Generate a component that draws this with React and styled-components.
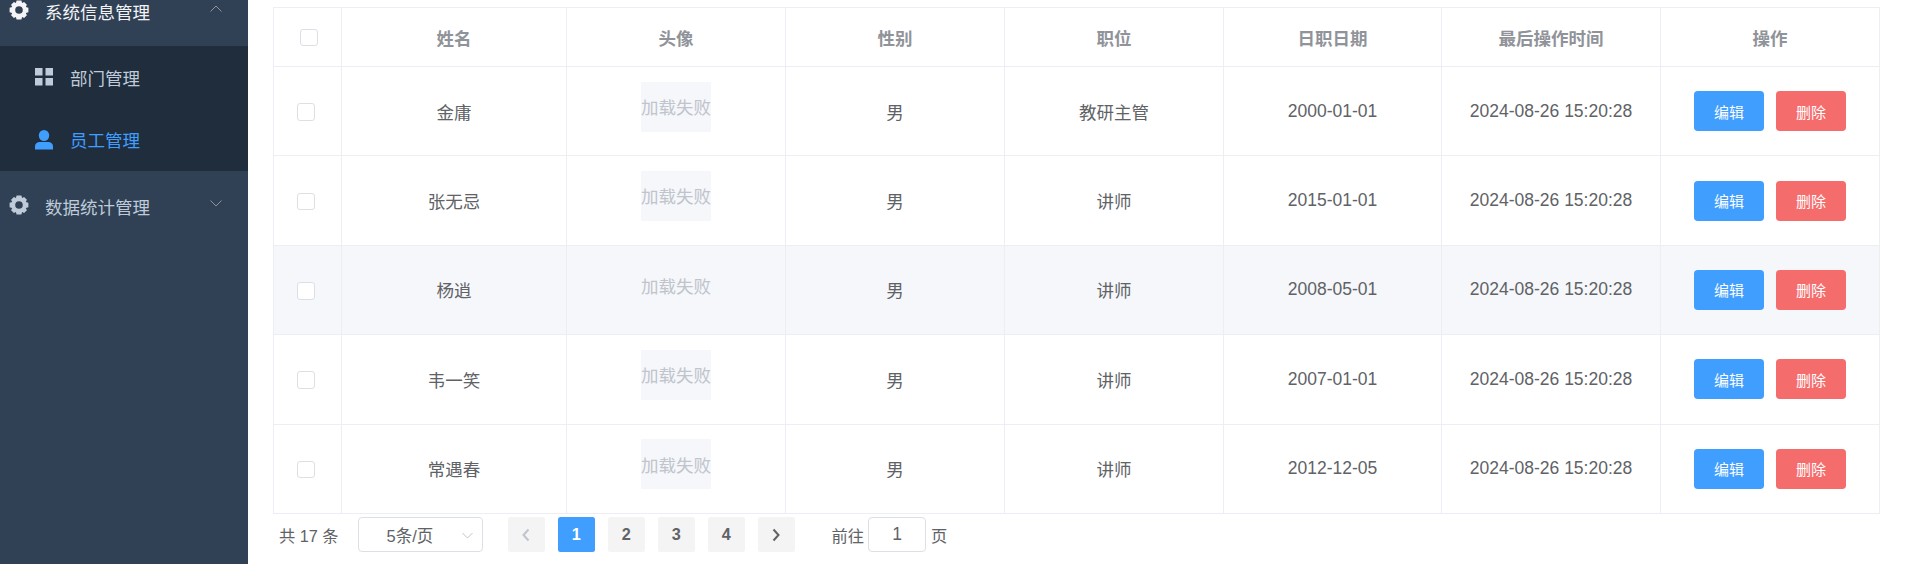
import React from 'react';
import styled, { createGlobalStyle } from 'styled-components';

const Global = createGlobalStyle`
  * { box-sizing: border-box; }
  html, body { margin: 0; padding: 0; height: 100%; background: #fff; overflow: hidden; }
  body { font-family: "Liberation Sans", "Noto Sans CJK SC", sans-serif; color: #606266; }
`;

const Shell = styled.div`
  display: flex;
  width: 1905px;
  height: 564px;
  overflow: hidden;
`;
const Sidebar = styled.aside`
  flex: 0 0 248px;
  background: #304156;
  overflow: hidden;
`;
const MenuTitle = styled.div`
  display: flex;
  align-items: center;
  height: 70px;
  padding-left: 9px;
  font-size: 17.5px;
  color: ${p => (p.$active ? '#f4f4f5' : '#bfcbd9')};
  margin-top: ${p => (p.$scrolled ? '-24px' : '0')};
`;
const TitleIcon = styled.svg`
  width: 20px;
  height: 20px;
  flex: none;
  margin: -2px 16px 0 0;
  fill: currentColor;
`;
const TitleText = styled.span`
  flex: 1;
`;
const Chevron = styled.svg`
  width: 12px;
  height: 7px;
  flex: none;
  margin: -5px 26px 0 0;
  fill: none;
  stroke: #909399;
  stroke-width: 1;
`;
const SubMenu = styled.div`
  background: #1f2d3d;
`;
const SubItem = styled.div`
  display: flex;
  align-items: center;
  height: 62.5px;
  padding-left: 35px;
  font-size: 17.5px;
  color: ${p => (p.$active ? '#409eff' : '#bfcbd9')};
`;
const SubIcon = styled.svg`
  width: 18px;
  height: 20px;
  flex: none;
  margin-right: 17px;
  fill: currentColor;
`;

const Main = styled.main`
  flex: 1;
  min-width: 0;
  padding: 7px 26px 0 25px;
`;
const Table = styled.table`
  width: 1607px;
  table-layout: fixed;
  border-collapse: separate;
  border-spacing: 0;
  border-top: 1px solid #ebeef5;
  border-left: 1px solid #ebeef5;
`;
const Th = styled.th`
  height: 59px;
  padding: 0;
  font-size: 17.5px;
  font-weight: 700;
  color: #909399;
  text-align: center;
  background: #fff;
  border-right: 1px solid #ebeef5;
  border-bottom: 1px solid #ebeef5;
`;
const Row = styled.tr`
  background: ${p => (p.$hover ? '#f5f7fa' : '#fff')};
`;
const Td = styled.td`
  height: 89.4px;
  padding: 0;
  font-size: 17.5px;
  color: #606266;
  text-align: center;
  border-right: 1px solid #ebeef5;
  border-bottom: 1px solid #ebeef5;
`;
const ImageTd = styled(Td)`
  vertical-align: top;
  padding-top: 14.6px;
`;
const Check = styled.span`
  display: inline-block;
  width: 17.5px;
  height: 17.5px;
  background: #fff;
  border: 1px solid #dcdfe6;
  border-radius: 3px;
  vertical-align: middle;
  margin-left: ${p => (p.$head ? '3px' : '-3px')};
  margin-top: ${p => (p.$head ? '-1px' : '0')};
`;
const Avatar = styled.div`
  width: 70px;
  height: 50px;
  margin: 0 auto;
  display: flex;
  align-items: center;
  justify-content: center;
  background: #f5f7fa;
  color: #c0c4cc;
  font-size: 17.5px;
  white-space: nowrap;
`;
const Actions = styled.div`
  display: flex;
  justify-content: center;
  gap: 12px;
`;
const ActionButton = styled.button`
  width: 70px;
  height: 40px;
  padding: 0;
  border: 0;
  border-radius: 3.75px;
  background: ${p => (p.$danger ? '#f56c6c' : '#409eff')};
  color: #fff;
  font: inherit;
  font-size: 15px;
`;

const Pager = styled.div`
  display: flex;
  align-items: center;
  height: 35px;
  margin-top: 3.5px;
  padding-left: 6px;
  font-size: 16.25px;
  color: #606266;
`;
const Total = styled.span`
  white-space: pre;
  margin-right: 19px;
`;
const SizeSelect = styled.div`
  position: relative;
  width: 125px;
  height: 35px;
  display: flex;
  align-items: center;
  padding-left: 28px;
  font-size: 16.5px;
  background: #fff;
  border: 1px solid #dcdfe6;
  border-radius: 4px;
  margin-right: 25px;
`;
const SelectArrow = styled.svg`
  position: absolute;
  right: 9px;
  top: 14px;
  width: 11px;
  height: 7px;
  fill: none;
  stroke: #c0c4cc;
  stroke-width: 1;
`;
const PageButton = styled.button`
  width: 37.5px;
  height: 35px;
  padding: 0;
  margin-right: 12.5px;
  border: 0;
  border-radius: 2.5px;
  display: flex;
  align-items: center;
  justify-content: center;
  background: ${p => (p.$active ? '#409eff' : '#f4f4f5')};
  color: ${p => (p.$active ? '#fff' : p.$disabled ? '#c0c4cc' : '#606266')};
  font: inherit;
  font-size: 16.25px;
  font-weight: 700;
`;
const PageArrow = styled.svg`
  width: 10px;
  height: 14px;
  fill: none;
  stroke: currentColor;
  stroke-width: 2;
`;
const JumpLabel = styled.span`
  margin-left: ${p => p.$left || '0'};
`;
const JumpInput = styled.div`
  width: 58px;
  height: 35px;
  margin: 0 5px 0 4px;
  display: flex;
  align-items: center;
  justify-content: center;
  background: #fff;
  border: 1px solid #dcdfe6;
  border-radius: 4px;
  font-size: 17.5px;
`;

const Gear = () => (
  <TitleIcon viewBox="0 0 20 20" aria-hidden="true">
    <path
      fillRule="evenodd"
      d="M7.6 0.4h4.8l0.7 2.6 2-0.9 2.8 2.6-1.1 2.2 2.6 0.9v4.4l-2.6 0.9 1.1 2.2-2.8 2.6-2-0.9-0.7 2.6H7.6l-0.7-2.6-2 0.9-2.8-2.6 1.1-2.2-2.6-0.9V7.8l2.6-0.9-1.1-2.2 2.8-2.6 2 0.9zM10 6.2a3.8 3.8 0 1 0 0 7.6 3.8 3.8 0 0 0 0-7.6z"
    />
  </TitleIcon>
);
const GridIcon = () => (
  <SubIcon viewBox="0 0 18 20" aria-hidden="true">
    <rect x="0" y="1" width="7.5" height="7.5" />
    <rect x="10.5" y="1" width="7.5" height="7.5" />
    <rect x="0" y="11" width="7.5" height="7.5" />
    <rect x="10.5" y="11" width="7.5" height="7.5" />
  </SubIcon>
);
const PersonIcon = () => (
  <SubIcon viewBox="0 0 18 20" aria-hidden="true">
    <ellipse cx="9" cy="5.5" rx="5.2" ry="5.5" />
    <path d="M0 19.5v-3.2c0-2.6 2.2-4.3 4.6-4.3h8.8c2.4 0 4.6 1.7 4.6 4.3v3.2z" />
  </SubIcon>
);

const rows = [
  ['金庸', '教研主管', '2000-01-01'],
  ['张无忌', '讲师', '2015-01-01'],
  ['杨逍', '讲师', '2008-05-01'],
  ['韦一笑', '讲师', '2007-01-01'],
  ['常遇春', '讲师', '2012-12-05'],
];
const widths = [68, 225, 219, 219, 219, 218, 219, 219];
const heads = ['姓名', '头像', '性别', '职位', '日职日期', '最后操作时间', '操作'];

export default function App() {
  return (
    <>
      <Global />
      <Shell>
        <Sidebar>
          <MenuTitle $active $scrolled>
            <Gear />
            <TitleText>系统信息管理</TitleText>
            <Chevron viewBox="0 0 12 7" aria-hidden="true"><path d="M0.5 6.5 6 1l5.5 5.5" /></Chevron>
          </MenuTitle>
          <SubMenu>
            <SubItem><GridIcon />部门管理</SubItem>
            <SubItem $active><PersonIcon />员工管理</SubItem>
          </SubMenu>
          <MenuTitle>
            <Gear />
            <TitleText>数据统计管理</TitleText>
            <Chevron viewBox="0 0 12 7" aria-hidden="true"><path d="M0.5 0.5 6 6l5.5-5.5" /></Chevron>
          </MenuTitle>
        </Sidebar>
        <Main>
          <Table>
            <colgroup>
              {widths.map((w, i) => <col key={i} width={w} />)}
            </colgroup>
            <thead>
              <tr>
                <Th><Check $head /></Th>
                {heads.map(h => <Th key={h}>{h}</Th>)}
              </tr>
            </thead>
            <tbody>
              {rows.map(([name, role, date], i) => (
                <Row key={name} $hover={i === 2}>
                  <Td><Check /></Td>
                  <Td>{name}</Td>
                  <ImageTd><Avatar>加载失败</Avatar></ImageTd>
                  <Td>男</Td>
                  <Td>{role}</Td>
                  <Td>{date}</Td>
                  <Td>2024-08-26 15:20:28</Td>
                  <Td>
                    <Actions>
                      <ActionButton>编辑</ActionButton>
                      <ActionButton $danger>删除</ActionButton>
                    </Actions>
                  </Td>
                </Row>
              ))}
            </tbody>
          </Table>
          <Pager>
            <Total>共 17 条</Total>
            <SizeSelect>
              5条/页
              <SelectArrow viewBox="0 0 11 7" aria-hidden="true"><path d="M0.5 1 5.5 6l5-5" /></SelectArrow>
            </SizeSelect>
            <PageButton $disabled aria-label="上一页">
              <PageArrow viewBox="0 0 10 14" aria-hidden="true"><path d="M7.5 1.5 2.5 7l5 5.5" /></PageArrow>
            </PageButton>
            <PageButton $active>1</PageButton>
            <PageButton>2</PageButton>
            <PageButton>3</PageButton>
            <PageButton>4</PageButton>
            <PageButton aria-label="下一页">
              <PageArrow viewBox="0 0 10 14" aria-hidden="true"><path d="M2.5 1.5 7.5 7l-5 5.5" /></PageArrow>
            </PageButton>
            <JumpLabel $left="24px">前往</JumpLabel>
            <JumpInput>1</JumpInput>
            <JumpLabel>页</JumpLabel>
          </Pager>
        </Main>
      </Shell>
    </>
  );
}
